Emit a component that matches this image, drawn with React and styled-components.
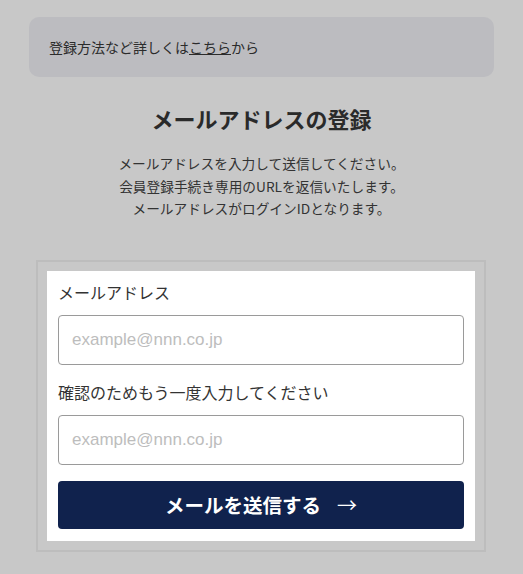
import React from 'react'
import styled, { createGlobalStyle } from 'styled-components'

const GlobalStyle = createGlobalStyle`
  body {
    margin: 0;
    background-color: #c8c8c8;
    font-family: 'Noto Sans CJK JP', 'Liberation Sans', sans-serif;
    color: #333;
  }
`

const Page = styled.div`
  width: 523px;
  min-height: 574px;
  padding: 17px 29px 0;
  box-sizing: border-box;
`

const Notice = styled.div`
  height: 60px;
  display: flex;
  align-items: center;
  padding-left: 20px;
  background-color: #bcbcc0;
  border-radius: 10px;
  font-size: 14px;
  color: #2b2b2b;
`

const NoticeLink = styled.a`
  color: inherit;
  text-decoration: underline;
`

const Title = styled.h1`
  margin: 25px 0 0;
  text-align: center;
  font-size: 22px;
  line-height: 32px;
  font-weight: 700;
  color: #2a2a2a;
`

const Lead = styled.p`
  margin: 18px 0 0;
  text-align: center;
  font-size: 13.7px;
  line-height: 22.5px;
  color: #333;
`

const Frame = styled.div`
  margin: 40px 8px 0 7px;
  border: 2px solid #bdbdbd;
  padding: 9px;
`

const Form = styled.form`
  background-color: #fff;
  padding: 9px 11px 12px;
  display: flex;
  flex-direction: column;
`

const Label = styled.label`
  font-size: 16px;
  line-height: 24px;
  color: #333;
  margin-top: ${(p) => (p.$first ? '0' : '15px')};
`

const Input = styled.input`
  margin-top: 11px;
  height: 50px;
  box-sizing: border-box;
  border: 1px solid #9a9a9a;
  border-radius: 4px;
  padding: 0 13px;
  font-family: 'Liberation Sans', Arial, sans-serif;
  font-size: 17px;
  color: #333;
  outline: none;

  &::placeholder {
    color: #bdbdbd;
  }
`

const SubmitButton = styled.button`
  margin-top: 16px;
  height: 48px;
  border: none;
  border-radius: 4px;
  background-color: #10224d;
  color: #fff;
  font-family: inherit;
  font-size: 19.5px;
  font-weight: 700;
  display: flex;
  align-items: center;
  justify-content: center;
  gap: 16px;
  cursor: pointer;
`

const Arrow = styled.span`
  font-weight: 400;
  font-size: 20px;
`

export default function App() {
  return (
    <>
      <GlobalStyle />
      <Page>
        <Notice>
          登録方法など詳しくは<NoticeLink href='#'>こちら</NoticeLink>から
        </Notice>
        <Title>メールアドレスの登録</Title>
        <Lead>
          メールアドレスを入力して送信してください。
          <br />
          会員登録手続き専用のURLを返信いたします。
          <br />
          メールアドレスがログインIDとなります。
        </Lead>
        <Frame>
          <Form onSubmit={(e) => e.preventDefault()}>
            <Label $first htmlFor='mail'>
              メールアドレス
            </Label>
            <Input id='mail' type='email' placeholder='example@nnn.co.jp' />
            <Label htmlFor='mail-confirm'>確認のためもう一度入力してください</Label>
            <Input id='mail-confirm' type='email' placeholder='example@nnn.co.jp' />
            <SubmitButton type='submit'>
              メールを送信する<Arrow>→</Arrow>
            </SubmitButton>
          </Form>
        </Frame>
      </Page>
    </>
  )
}
